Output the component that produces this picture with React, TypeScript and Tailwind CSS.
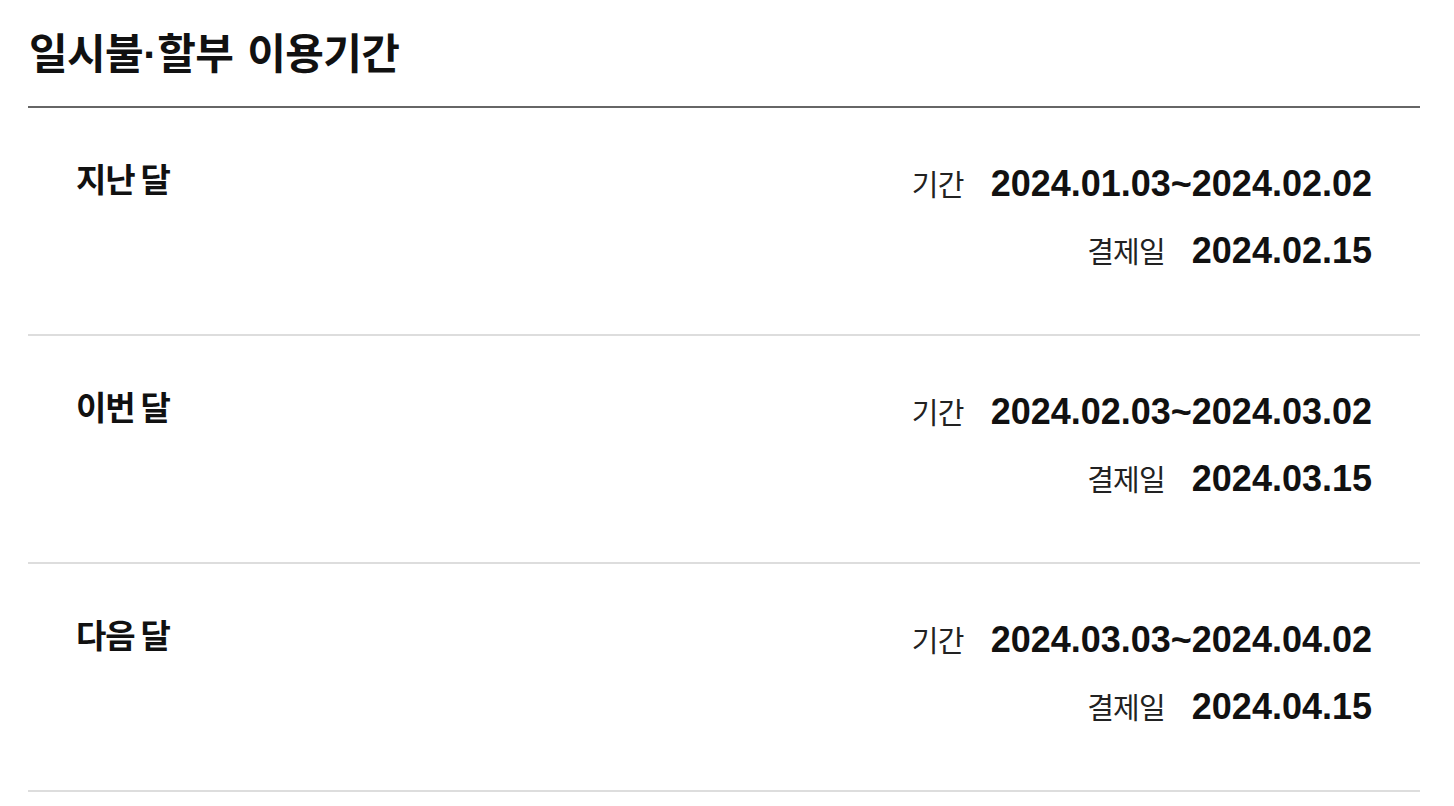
import React from "react";

const rows = [
  { label: "지난 달", period: "2024.01.03~2024.02.02", pay: "2024.02.15" },
  { label: "이번 달", period: "2024.02.03~2024.03.02", pay: "2024.03.15" },
  { label: "다음 달", period: "2024.03.03~2024.04.02", pay: "2024.04.15" },
];

const kr = { fontFamily: '"Noto Sans CJK KR", sans-serif' };

export default function App() {
  return (
    <div
      className="w-[1454px] h-[806px] bg-white overflow-hidden"
      style={{ fontFamily: '"Liberation Sans", "Noto Sans CJK KR", sans-serif' }}
    >
      <div className="ml-[28px] w-[1392px]">
        <div className="h-[108px] border-b-2 border-[#666666] flex items-center pl-[1px] pb-[1px]">
          <h1
            className="text-[42px] font-bold text-[#111111] tracking-[-0.6px] leading-[50px]"
            style={kr}
          >
            일시불
            <span style={{ fontFamily: '"Liberation Sans", sans-serif' }} className="tracking-[0px]">
              ·
            </span>
            할부<span className="inline-block w-[14px]"></span>이용기간
          </h1>
        </div>
        {rows.map((r) => (
          <div
            key={r.label}
            className="h-[228px] border-b-2 border-[#dddddd] flex justify-between items-start px-[48px] pt-[53px]"
          >
            <div
              className="text-[33px] font-bold text-[#111111] leading-[34px] tracking-[-1.2px]"
              style={kr}
            >
              {r.label}
            </div>
            <div className="flex flex-col items-end mt-[2px]">
              <div className="h-[42px] flex items-center">
                <span
                  className="text-[29px] text-[#222222] tracking-[-0.8px] mr-[27px]"
                  style={kr}
                >
                  기간
                </span>
                <span className="text-[36px] font-bold text-[#111111] tracking-[0px]">
                  {r.period}
                </span>
              </div>
              <div className="h-[42px] mt-[25px] flex items-center">
                <span
                  className="text-[29px] text-[#222222] tracking-[-0.8px] mr-[27px]"
                  style={kr}
                >
                  결제일
                </span>
                <span className="text-[36px] font-bold text-[#111111] tracking-[0px]">
                  {r.pay}
                </span>
              </div>
            </div>
          </div>
        ))}
      </div>
    </div>
  );
}
